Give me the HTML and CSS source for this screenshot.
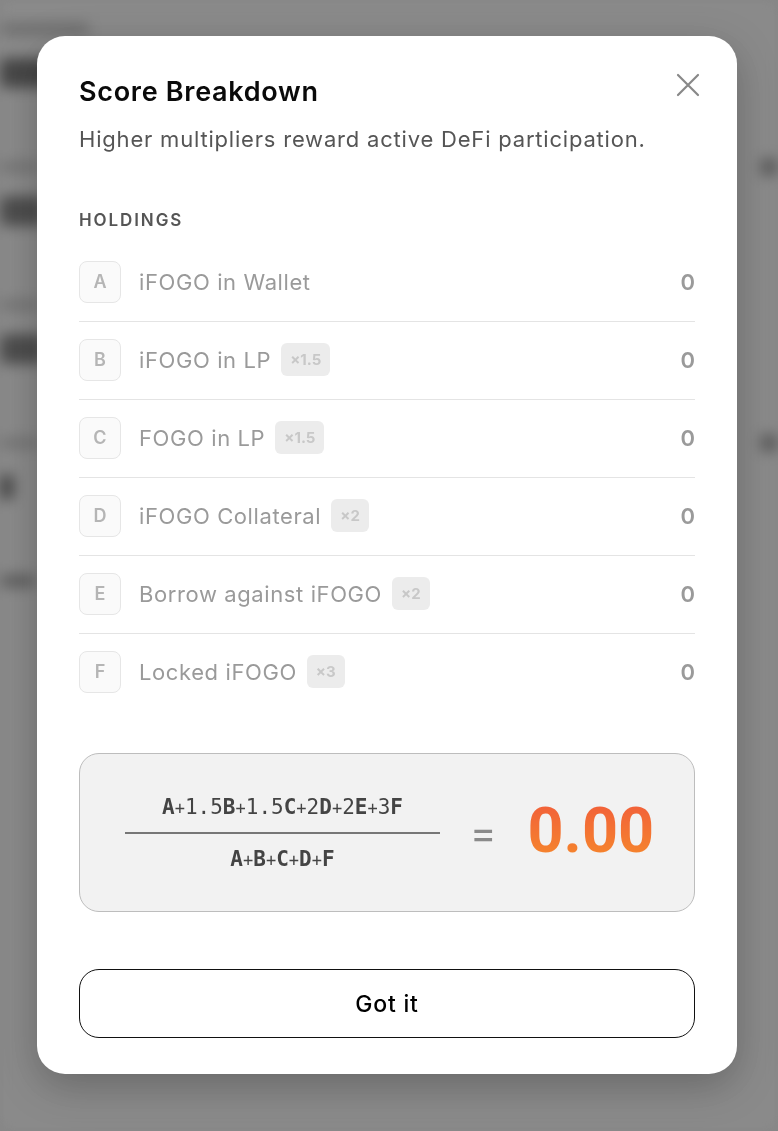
FILE: index.html
```html
<!DOCTYPE html>
<html lang="en">
<head>
    <meta charset="UTF-8">
    <meta name="viewport" content="width=device-width, initial-scale=1.0">
    <title>Score Breakdown</title>
    <link rel="stylesheet" href="styles.css">
</head>
<body>
    <!-- blurred page behind the modal -->
    <div class="page">
        <div class="band"><span class="blob blob-crumb"></span></div>
        <div class="band"><span class="blob blob-title"></span></div>
        <div class="band band-gap"><span class="blob blob-label"></span><span class="blob blob-side"></span></div>
        <div class="band"><span class="blob blob-value"></span></div>
        <div class="band band-gap"><span class="blob blob-label"></span></div>
        <div class="band"><span class="blob blob-value"></span></div>
        <div class="band band-gap"><span class="blob blob-label"></span><span class="blob blob-side"></span></div>
        <div class="band"><span class="blob blob-small"></span></div>
        <div class="band band-gap"><span class="blob blob-foot"></span></div>
    </div>

    <div class="overlay">
        <div class="modal">
            <button class="close-btn" aria-label="Close">
                <svg width="24" height="24" viewBox="0 0 24 24" fill="none" stroke="#888" stroke-width="2.2" stroke-linecap="round">
                    <path d="M2 2 L22 22 M22 2 L2 22"/>
                </svg>
            </button>

            <h2 class="modal-title">Score Breakdown</h2>
            <p class="modal-sub">Higher multipliers reward active DeFi participation.</p>

            <div class="section-label">HOLDINGS</div>

            <div class="rows">
                <div class="row">
                    <span class="key">A</span>
                    <span class="name">iFOGO in Wallet</span>
                    <span class="amount">0</span>
                </div>
                <div class="row">
                    <span class="key">B</span>
                    <span class="name">iFOGO in LP</span>
                    <span class="mult">×1.5</span>
                    <span class="amount">0</span>
                </div>
                <div class="row">
                    <span class="key">C</span>
                    <span class="name">FOGO in LP</span>
                    <span class="mult">×1.5</span>
                    <span class="amount">0</span>
                </div>
                <div class="row">
                    <span class="key">D</span>
                    <span class="name">iFOGO Collateral</span>
                    <span class="mult">×2</span>
                    <span class="amount">0</span>
                </div>
                <div class="row">
                    <span class="key">E</span>
                    <span class="name">Borrow against iFOGO</span>
                    <span class="mult">×2</span>
                    <span class="amount">0</span>
                </div>
                <div class="row">
                    <span class="key">F</span>
                    <span class="name">Locked iFOGO</span>
                    <span class="mult">×3</span>
                    <span class="amount">0</span>
                </div>
            </div>

            <div class="formula">
                <div class="fraction">
                    <div class="numer"><b>A</b><i>+</i>1.5<b>B</b><i>+</i>1.5<b>C</b><i>+</i>2<b>D</b><i>+</i>2<b>E</b><i>+</i>3<b>F</b></div>
                    <div class="denom"><b>A</b><i>+</i><b>B</b><i>+</i><b>C</b><i>+</i><b>D</b><i>+</i><b>F</b></div>
                </div>
                <span class="equals">=</span>
                <span class="score">0.00</span>
            </div>

            <button class="got-it">Got it</button>
        </div>
    </div>
</body>
</html>
```

FILE: styles.css
```css
/* Basic Reset */
* {
    margin: 0;
    padding: 0;
    box-sizing: border-box;
}

body {
    font-family: 'Inter', 'Liberation Sans', sans-serif;
    background-color: #8c8c8c;
    color: #111;
    height: 1131px;
    overflow: hidden;
}

/* page behind, blurred */
.page {
    height: 1131px;
    padding-top: 12px;
    background-color: #939393;
    filter: blur(7px);
}

.band {
    display: flex;
    justify-content: space-between;
    align-items: center;
    height: 34px;
    margin-bottom: 10px;
}

.band-gap {
    margin-top: 60px;
}

.blob {
    display: block;
    border-radius: 6px;
}

.blob-crumb {
    width: 90px;
    height: 12px;
    background-color: #6a6a6a;
}

.blob-title {
    width: 56px;
    height: 30px;
    background-color: #333;
}

.blob-label {
    width: 40px;
    height: 10px;
    background-color: #707070;
}

.blob-value {
    width: 44px;
    height: 30px;
    background-color: #3c3c3c;
}

.blob-side {
    width: 18px;
    height: 18px;
    background-color: #505050;
}

.blob-small {
    width: 14px;
    height: 26px;
    background-color: #333;
}

.blob-foot {
    width: 36px;
    height: 12px;
    background-color: #505050;
}

.overlay {
    position: fixed;
    inset: 0;
    background-color: rgba(120, 120, 120, 0.3);
    padding: 36px 0 0 37px;
}

.modal {
    position: relative;
    width: 700px;
    height: 1038px;
    background-color: #FFFFFF;
    border-radius: 28px;
    padding: 40px 42px 36px;
    box-shadow: 0 12px 40px rgba(0, 0, 0, 0.25);
}

.close-btn {
    position: absolute;
    top: 37px;
    right: 37px;
    background: none;
    border: none;
    cursor: pointer;
    line-height: 0;
}

.modal-title {
    font-size: 27px;
    font-weight: 600;
    line-height: 32px;
    color: #0a0a0a;
    letter-spacing: 0.7px;
}

.modal-sub {
    font-size: 22px;
    line-height: 30px;
    color: #555;
    letter-spacing: 0.8px;
    margin-top: 16px;
}

.section-label {
    font-size: 17px;
    font-weight: 600;
    line-height: 24px;
    letter-spacing: 1.9px;
    color: #555;
    margin-top: 54px;
}

.rows {
    margin-top: 12px;
}

.row {
    display: flex;
    align-items: center;
    height: 78px;
    padding-bottom: 2px;
    border-bottom: 1px solid #e4e4e4;
}

.row:last-child {
    border-bottom: none;
    height: 77px;
}

.key {
    width: 42px;
    height: 42px;
    border: 1px solid #e6e6e6;
    background-color: #fafafa;
    border-radius: 8px;
    display: flex;
    align-items: center;
    justify-content: center;
    font-size: 18px;
    font-weight: 600;
    color: #b5b5b5;
    margin-right: 18px;
}

.name {
    font-size: 22px;
    letter-spacing: 0.6px;
    color: #9a9a9a;
}

.mult {
    margin-left: 10px;
    background-color: #ececec;
    color: #c8c8c8;
    font-size: 15px;
    font-weight: 700;
    height: 33px;
    padding: 0 9px;
    border-radius: 6px;
    display: flex;
    align-items: center;
}

.amount {
    margin-left: auto;
    font-size: 22px;
    font-weight: 600;
    color: #9a9a9a;
}

.formula {
    margin-top: 42px;
    height: 159px;
    background-color: #f2f2f2;
    border: 1px solid #bdbdbd;
    border-radius: 20px;
    display: flex;
    align-items: center;
    padding-left: 45px;
}

.fraction {
    width: 315px;
    text-align: center;
    font-family: 'DejaVu Sans Mono', monospace;
    font-size: 21px;
    color: #444;
}

.fraction b {
    font-weight: 700;
}

.fraction i {
    font-style: normal;
    font-size: 17px;
}

.numer {
    padding-bottom: 13px;
    border-bottom: 2px solid #777;
}

.denom {
    padding-top: 13px;
}

.equals {
    margin-left: 30px;
    font-size: 40px;
    color: #8a8a8a;
}

.score {
    margin-left: 31px;
    margin-bottom: 4px;
    font-family: 'Roboto', 'Inter', sans-serif;
    font-size: 63px;
    font-weight: 700;
    background: linear-gradient(180deg, #f15a3c, #f68c2a);
    -webkit-background-clip: text;
    background-clip: text;
    color: transparent;
}

.got-it {
    display: block;
    width: 100%;
    height: 69px;
    margin-top: 57px;
    background-color: #FFFFFF;
    border: 1px solid #111;
    border-radius: 20px;
    font-family: 'Inter', 'Liberation Sans', sans-serif;
    font-size: 23px;
    font-weight: 500;
    letter-spacing: 0.8px;
    color: #000;
    cursor: pointer;
}
```
